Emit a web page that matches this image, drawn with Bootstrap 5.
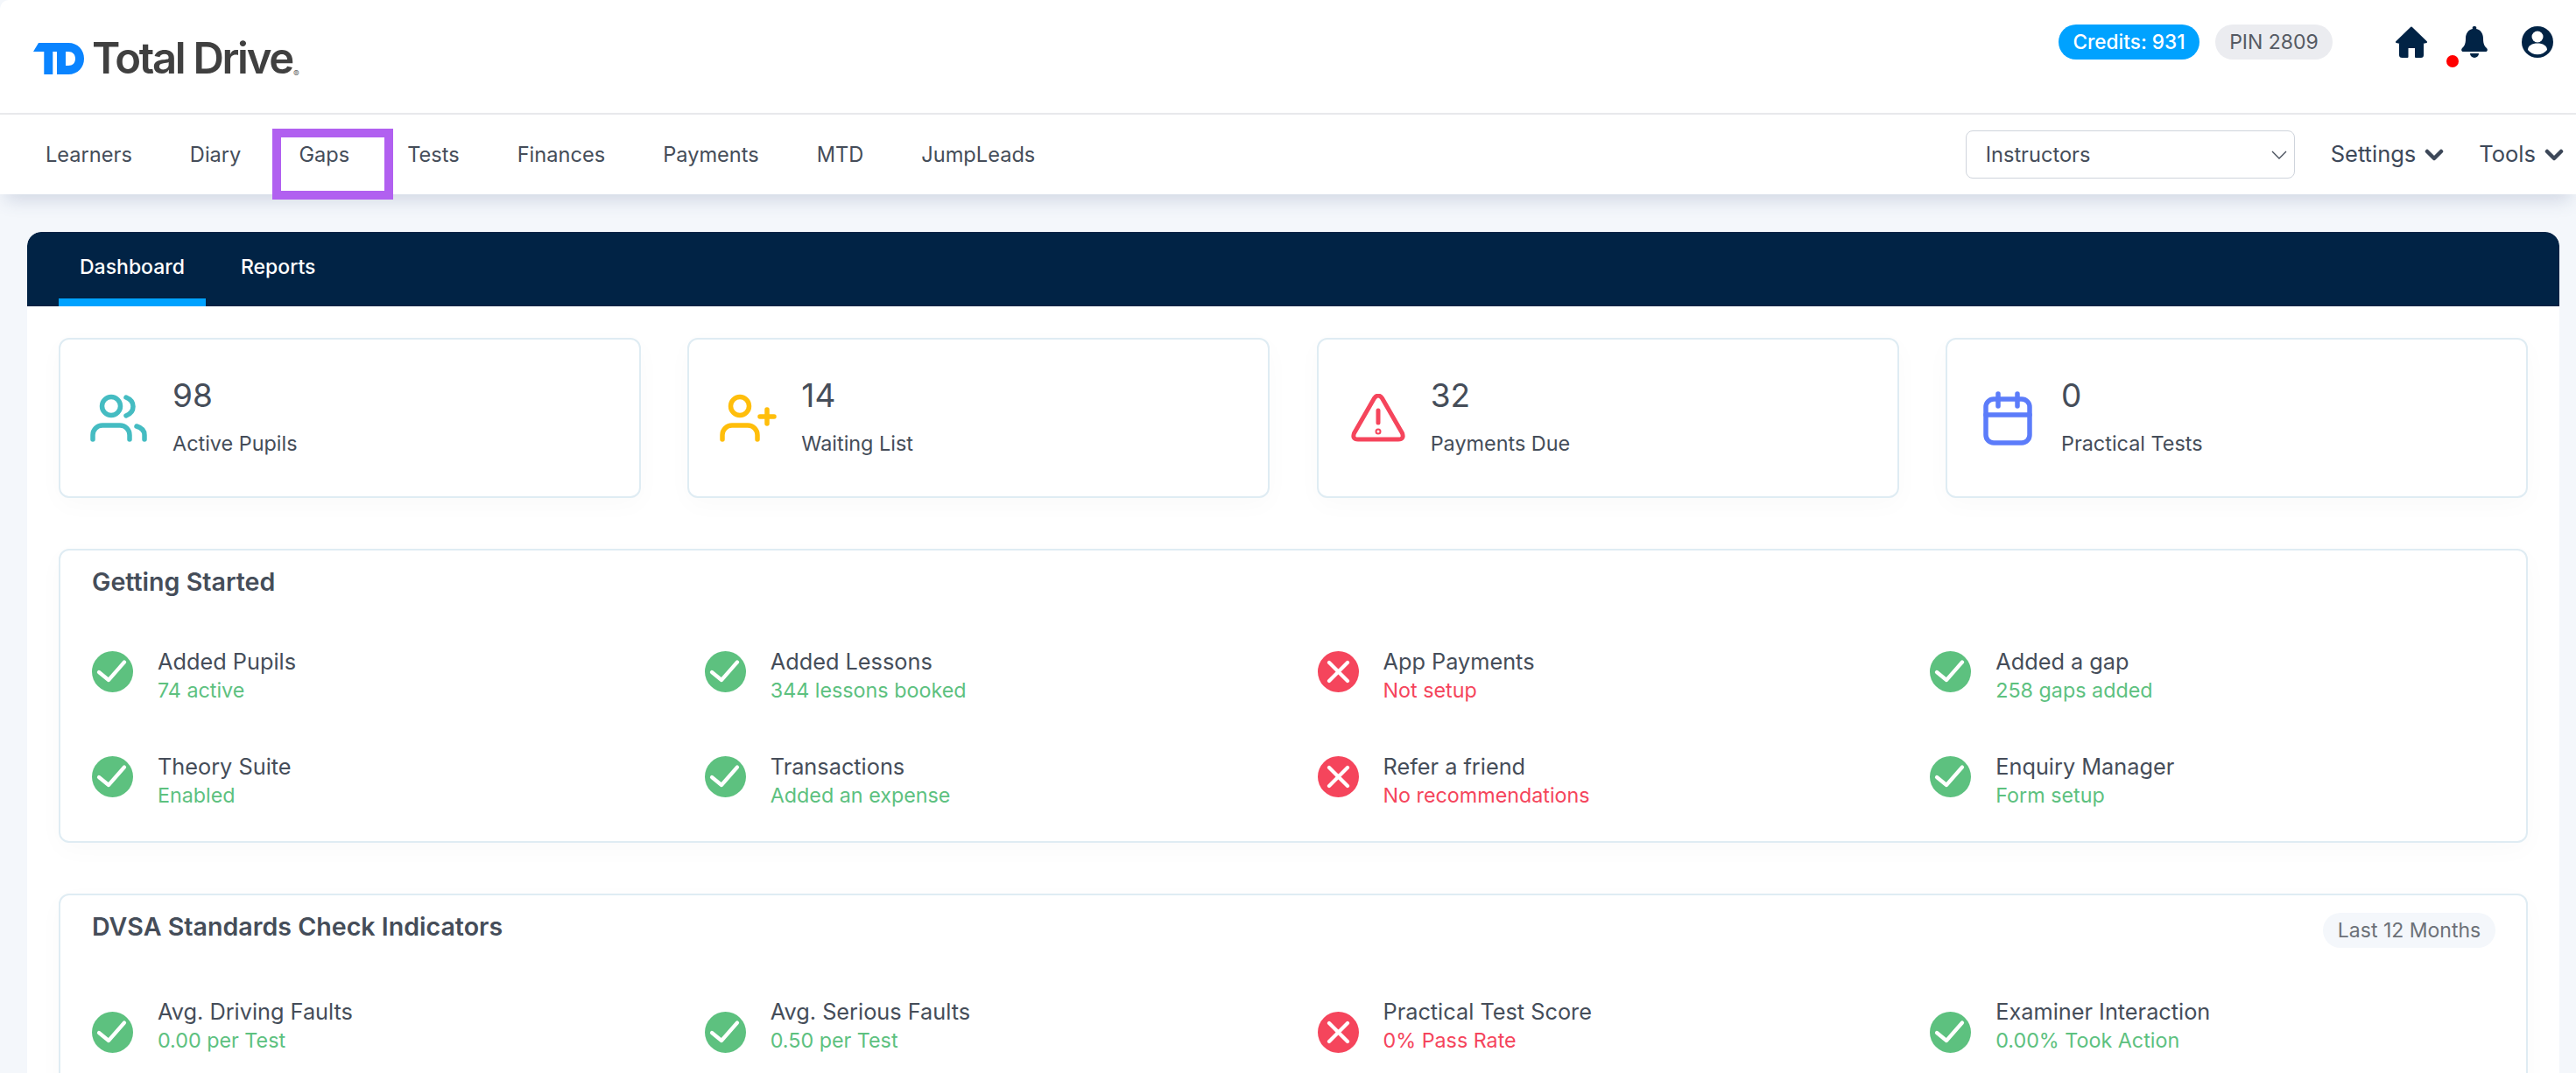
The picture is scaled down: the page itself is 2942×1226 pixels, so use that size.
<!DOCTYPE html>
<html lang="en">
<head>
<meta charset="utf-8">
<title>Total Drive</title>
<link href="https://cdn.jsdelivr.net/npm/bootstrap@5.3.0/dist/css/bootstrap.min.css" rel="stylesheet">
<style>
html,body{height:100%;overflow:hidden}
body{background:#f4f7fb;font-family:Inter,"Liberation Sans",sans-serif;color:#454d59;font-size:24px}
.td-header{height:131px;background:#fff;border-bottom:2px solid #e9eaec;padding:4px 26px 0 38px;border-top-left-radius:10px}
.td-word{font-size:49px;font-weight:600;color:#404040;letter-spacing:-2.300px;line-height:1;margin-left:9px}
.td-reg{font-size:10px;letter-spacing:0;color:#666;align-self:flex-end;margin:0 0 2px 1px;line-height:1}
.td-right{margin-top:-37px}
.td-pill{height:40px;border-radius:20px;font-size:23px;line-height:40px;padding:0 16px;white-space:nowrap}
.td-credits{background:#00a2ff;color:#fff;width:161px;text-align:center;font-weight:500;font-size:22.600px;padding:0;margin-right:18px}
.td-pin{background:#ebecf0;color:#555a63;width:134px;text-align:center;padding:0;margin-right:72px}
.td-bell{position:relative;margin:0 39px}
.td-dot{position:absolute;left:-17px;top:33px;width:14px;height:14px;border-radius:50%;background:#f00}
.td-nav{height:91px;background:#fff;padding:0 14px 0 19px;box-shadow:0 12px 20px -6px rgba(60,80,130,.2);position:relative}
.td-nav .nav-link{color:#454d59;padding:0 33px;line-height:91px;font-size:23.600px;white-space:nowrap}
.td-select{width:376px;height:55px;font-size:23.600px;color:#454d59;padding:0 22px;border-color:#cfd4dc;border-radius:8px;background-image:url("data:image/svg+xml,%3csvg xmlns='http://www.w3.org/2000/svg' viewBox='0 0 18 10'%3e%3cpath fill='none' stroke='%23454d59' stroke-width='1.300' d='M1 1l8 8 8-8'/%3e%3c/svg%3e");background-size:18px 10px;background-position:right 8px center;margin-right:41px}
.td-menu{font-size:25.500px;color:#3d4859;display:flex;align-items:center;gap:10px}
.td-menu-first{margin-right:40px}
.td-panel{margin:43px 19px 0 31px;background:#fff;border-radius:16px 16px 0 0;height:961px;overflow:hidden}
.td-bar{height:85px;background:#012345;border-radius:16px 16px 0 0;padding-left:36px}
.td-tab{color:#fff;font-size:23px;font-weight:500;line-height:80px;padding:0 24px;margin-right:16px;height:85px}
.td-tab.is-on{border-bottom:9px solid #00a2ff}
.td-body{padding:36px 36px 0}
.td-stats{--bs-gutter-x:53.330px;--bs-gutter-y:0}
.td-card{background:#fff;border:2px solid #dfecf3;border-radius:12px;box-shadow:0 8px 30px rgba(0,0,0,.025)}
.td-stat{height:183px;padding:0 34px;display:flex;align-items:center}
.td-num{font-size:37px;line-height:46px;margin-top:-5px;margin-bottom:17px}
.td-lab{font-size:23.400px;line-height:30px}
.td-stat-icon{flex:none;display:block;margin-right:28px}
.td-icon-tri{margin-left:3px;margin-right:29px}
.td-icon-cal{margin-left:7px;margin-right:33px}
.td-sec{margin-top:58px;padding:16px 0 0 36px}
.td-sec-h{font-size:28.600px;font-weight:600;line-height:40px;margin:0}
.td-items{margin-right:-19px}
.td-item{height:120px;display:flex;gap:28px;align-items:flex-start}
.td-item svg{flex:none}
.td-t{font-size:25.300px;line-height:32px;margin-top:-4px}
.td-s{font-size:23.300px;line-height:32px;margin-top:1px}
.td-dv .td-t{margin-top:-16px}
.td-g{color:#5dc17f}
.td-r{color:#f5455c}
.td-range{height:40px;border-radius:20px;background:#f4f7fb;color:#6c7178;font-size:23px;line-height:40px;width:197px;text-align:center;margin-right:35px;margin-top:4px}
.td-hi{position:absolute;left:311px;top:16px;width:138px;height:81px;border:10px solid #b160f0;pointer-events:none}
</style>
</head>
<body>
<header class="td-header d-flex align-items-center">
  <div class="d-flex align-items-center">
    <svg width="58" height="36" viewBox="0 0 58 36" role="img" aria-label="Total Drive logo"><path fill="#0a84ff" fill-rule="evenodd" d="M0 10 6 0H40C51 0 58 8 58 18S51 36 40 36H27V10H22.300V36H12.300V10ZM37 10V26H40C45 26 48 23 48 18S45 10 40 10Z"/></svg>
    <span class="td-word">Total Drive</span><span class="td-reg">®</span>
  </div>
  <div class="td-right ms-auto d-flex align-items-center">
    <span class="td-pill td-credits">Credits: 931</span>
    <span class="td-pill td-pin">PIN 2809</span>
    <svg width="36" height="36" viewBox="0 0 36 36"><path fill="#012345" stroke="#012345" stroke-width="2" stroke-linejoin="round" d="M18 1.500 35 18 31 19V33Q31 35 29 35H23V24H13.500V35H7.500Q5 35 5 33V19L1 18Z"/></svg>
    <div class="td-bell">
      <svg class="d-block" width="30" height="36" viewBox="0 0 30 36"><path fill="#012345" d="M15 0a2 2 0 0 1 2 3c5 1 8 5 8 11 0 7 2 9 4 11 1.500 1.500 1 4-1.500 4H2.500C0 29-.5 26.500 1 25c2-2 4-4 4-11 0-6 3-10 8-11a2 2 0 0 1 2-3zM10 31h10a5 5 0 0 1-10 0z"/></svg>
      <span class="td-dot"></span>
    </div>
    <svg width="36" height="36" viewBox="0 0 36 36"><circle cx="18" cy="18" r="18" fill="#012345"/><circle cx="18" cy="12" r="6.500" fill="#fff"/><path fill="#fff" d="M7 27c0-5 5-7.500 11-7.500S29 22 29 27a14 14 0 0 1-22 0z"/></svg>
  </div>
</header>

<nav class="td-nav d-flex align-items-center">
  <ul class="nav flex-nowrap">
    <li class="nav-item"><a class="nav-link" href="#">Learners</a></li>
    <li class="nav-item"><a class="nav-link" href="#">Diary</a></li>
    <li class="nav-item"><a class="nav-link" href="#">Gaps</a></li>
    <li class="nav-item"><a class="nav-link" href="#">Tests</a></li>
    <li class="nav-item"><a class="nav-link" href="#">Finances</a></li>
    <li class="nav-item"><a class="nav-link" href="#">Payments</a></li>
    <li class="nav-item"><a class="nav-link" href="#">MTD</a></li>
    <li class="nav-item"><a class="nav-link" href="#">JumpLeads</a></li>
  </ul>
  <div class="ms-auto d-flex align-items-center">
    <select class="form-select td-select"><option>Instructors</option></select>
    <span class="td-menu td-menu-first">Settings <svg width="22" height="14" viewBox="0 0 22 14"><path fill="none" stroke="#3d4859" stroke-width="4.500" stroke-linecap="round" stroke-linejoin="round" d="M3 3l8 8 8-8"/></svg></span>
    <span class="td-menu">Tools <svg width="22" height="14" viewBox="0 0 22 14"><path fill="none" stroke="#3d4859" stroke-width="4.500" stroke-linecap="round" stroke-linejoin="round" d="M3 3l8 8 8-8"/></svg></span>
  </div>
  <span class="td-hi"></span>
</nav>

<main class="td-panel">
  <div class="td-bar d-flex">
    <div class="td-tab is-on">Dashboard</div>
    <div class="td-tab">Reports</div>
  </div>
  <div class="td-body">
    <div class="row td-stats">
      <div class="col-3"><div class="td-card td-stat">
        <svg class="td-stat-icon" width="66" height="56" viewBox="0 0 66 56" fill="none" stroke="#45bcc2" stroke-width="5.500" stroke-linecap="round"><circle cx="24" cy="14" r="10.500"/><path d="M41 4c5 2 8 6 8 10.500S46 23 41 25M3 52v-5a11 11 0 0 1 11-11h20a11 11 0 0 1 11 11v5M53 37c5 1.500 9 5 9 10v5"/></svg>
        <div><div class="td-num">98</div><div class="td-lab">Active Pupils</div></div>
      </div></div>
      <div class="col-3"><div class="td-card td-stat">
        <svg class="td-stat-icon" width="66" height="56" viewBox="0 0 66 56" fill="none" stroke="#ffbe0b" stroke-width="5.500" stroke-linecap="round"><circle cx="24" cy="14" r="10.500"/><path d="M4 52v-5a11 11 0 0 1 11-11h18a11 11 0 0 1 11 11v5M55 18v16M47 26h16"/></svg>
        <div><div class="td-num">14</div><div class="td-lab">Waiting List</div></div>
      </div></div>
      <div class="col-3"><div class="td-card td-stat">
        <svg class="td-stat-icon td-icon-tri" width="62" height="56" viewBox="0 0 62 56" fill="none" stroke="#f5455c" stroke-width="5" stroke-linecap="round" stroke-linejoin="round"><path d="M26.500 5 3.500 45Q1 52 8 52H54Q61 52 58.500 45L35.500 5Q31 -1 26.500 5ZM31 19V33"/><circle cx="31" cy="43" r="1"/></svg>
        <div><div class="td-num">32</div><div class="td-lab">Payments Due</div></div>
      </div></div>
      <div class="col-3"><div class="td-card td-stat">
        <svg class="td-stat-icon td-icon-cal" width="56" height="62" viewBox="0 0 56 62" fill="none" stroke="#5c7cfa" stroke-width="5.500" stroke-linecap="round"><rect x="3" y="9" width="50" height="50" rx="9"/><path d="M17 3V17M39 3V17M3 27H53"/></svg>
        <div><div class="td-num">0</div><div class="td-lab">Practical Tests</div></div>
      </div></div>
    </div>

    <section class="td-card td-sec" style="height:336px">
      <h2 class="td-sec-h" style="margin-bottom:59px">Getting Started</h2>
      <div class="row g-0 td-items">
        <div class="col-3"><div class="td-item"><svg width="47" height="47" viewBox="0 0 47 47"><circle cx="23.500" cy="23.500" r="23.500" fill="#5dc17f"/><path fill="none" stroke="#fff" stroke-width="4.200" stroke-linecap="round" stroke-linejoin="round" d="M8 24 19 33 37 12.500"/></svg><div><div class="td-t">Added Pupils</div><div class="td-s td-g">74 active</div></div></div></div>
        <div class="col-3"><div class="td-item"><svg width="47" height="47" viewBox="0 0 47 47"><circle cx="23.500" cy="23.500" r="23.500" fill="#5dc17f"/><path fill="none" stroke="#fff" stroke-width="4.200" stroke-linecap="round" stroke-linejoin="round" d="M8 24 19 33 37 12.500"/></svg><div><div class="td-t">Added Lessons</div><div class="td-s td-g">344 lessons booked</div></div></div></div>
        <div class="col-3"><div class="td-item"><svg width="47" height="47" viewBox="0 0 47 47"><circle cx="23.500" cy="23.500" r="23.500" fill="#f5455c"/><path fill="none" stroke="#fff" stroke-width="4.200" stroke-linecap="round" d="M13 13 34 34M34 13 13 34"/></svg><div><div class="td-t">App Payments</div><div class="td-s td-r">Not setup</div></div></div></div>
        <div class="col-3"><div class="td-item"><svg width="47" height="47" viewBox="0 0 47 47"><circle cx="23.500" cy="23.500" r="23.500" fill="#5dc17f"/><path fill="none" stroke="#fff" stroke-width="4.200" stroke-linecap="round" stroke-linejoin="round" d="M8 24 19 33 37 12.500"/></svg><div><div class="td-t">Added a gap</div><div class="td-s td-g">258 gaps added</div></div></div></div>
        <div class="col-3"><div class="td-item"><svg width="47" height="47" viewBox="0 0 47 47"><circle cx="23.500" cy="23.500" r="23.500" fill="#5dc17f"/><path fill="none" stroke="#fff" stroke-width="4.200" stroke-linecap="round" stroke-linejoin="round" d="M8 24 19 33 37 12.500"/></svg><div><div class="td-t">Theory Suite</div><div class="td-s td-g">Enabled</div></div></div></div>
        <div class="col-3"><div class="td-item"><svg width="47" height="47" viewBox="0 0 47 47"><circle cx="23.500" cy="23.500" r="23.500" fill="#5dc17f"/><path fill="none" stroke="#fff" stroke-width="4.200" stroke-linecap="round" stroke-linejoin="round" d="M8 24 19 33 37 12.500"/></svg><div><div class="td-t">Transactions</div><div class="td-s td-g">Added an expense</div></div></div></div>
        <div class="col-3"><div class="td-item"><svg width="47" height="47" viewBox="0 0 47 47"><circle cx="23.500" cy="23.500" r="23.500" fill="#f5455c"/><path fill="none" stroke="#fff" stroke-width="4.200" stroke-linecap="round" d="M13 13 34 34M34 13 13 34"/></svg><div><div class="td-t">Refer a friend</div><div class="td-s td-r">No recommendations</div></div></div></div>
        <div class="col-3"><div class="td-item"><svg width="47" height="47" viewBox="0 0 47 47"><circle cx="23.500" cy="23.500" r="23.500" fill="#5dc17f"/><path fill="none" stroke="#fff" stroke-width="4.200" stroke-linecap="round" stroke-linejoin="round" d="M8 24 19 33 37 12.500"/></svg><div><div class="td-t">Enquiry Manager</div><div class="td-s td-g">Form setup</div></div></div></div>
      </div>
    </section>

    <section class="td-card td-sec" style="height:400px">
      <div class="d-flex justify-content-between align-items-start" style="margin-bottom:73px">
        <h2 class="td-sec-h">DVSA Standards Check Indicators</h2>
        <span class="td-range">Last 12 Months</span>
      </div>
      <div class="row g-0 td-items td-dv">
        <div class="col-3"><div class="td-item"><svg width="47" height="47" viewBox="0 0 47 47"><circle cx="23.500" cy="23.500" r="23.500" fill="#5dc17f"/><path fill="none" stroke="#fff" stroke-width="4.200" stroke-linecap="round" stroke-linejoin="round" d="M8 24 19 33 37 12.500"/></svg><div><div class="td-t">Avg. Driving Faults</div><div class="td-s td-g">0.00 per Test</div></div></div></div>
        <div class="col-3"><div class="td-item"><svg width="47" height="47" viewBox="0 0 47 47"><circle cx="23.500" cy="23.500" r="23.500" fill="#5dc17f"/><path fill="none" stroke="#fff" stroke-width="4.200" stroke-linecap="round" stroke-linejoin="round" d="M8 24 19 33 37 12.500"/></svg><div><div class="td-t">Avg. Serious Faults</div><div class="td-s td-g">0.50 per Test</div></div></div></div>
        <div class="col-3"><div class="td-item"><svg width="47" height="47" viewBox="0 0 47 47"><circle cx="23.500" cy="23.500" r="23.500" fill="#f5455c"/><path fill="none" stroke="#fff" stroke-width="4.200" stroke-linecap="round" d="M13 13 34 34M34 13 13 34"/></svg><div><div class="td-t">Practical Test Score</div><div class="td-s td-r">0% Pass Rate</div></div></div></div>
        <div class="col-3"><div class="td-item"><svg width="47" height="47" viewBox="0 0 47 47"><circle cx="23.500" cy="23.500" r="23.500" fill="#5dc17f"/><path fill="none" stroke="#fff" stroke-width="4.200" stroke-linecap="round" stroke-linejoin="round" d="M8 24 19 33 37 12.500"/></svg><div><div class="td-t">Examiner Interaction</div><div class="td-s td-g">0.00% Took Action</div></div></div></div>
      </div>
    </section>
  </div>
</main>
<script src="https://cdn.jsdelivr.net/npm/bootstrap@5.3.0/dist/js/bootstrap.bundle.min.js"></script>
</body>
</html>
